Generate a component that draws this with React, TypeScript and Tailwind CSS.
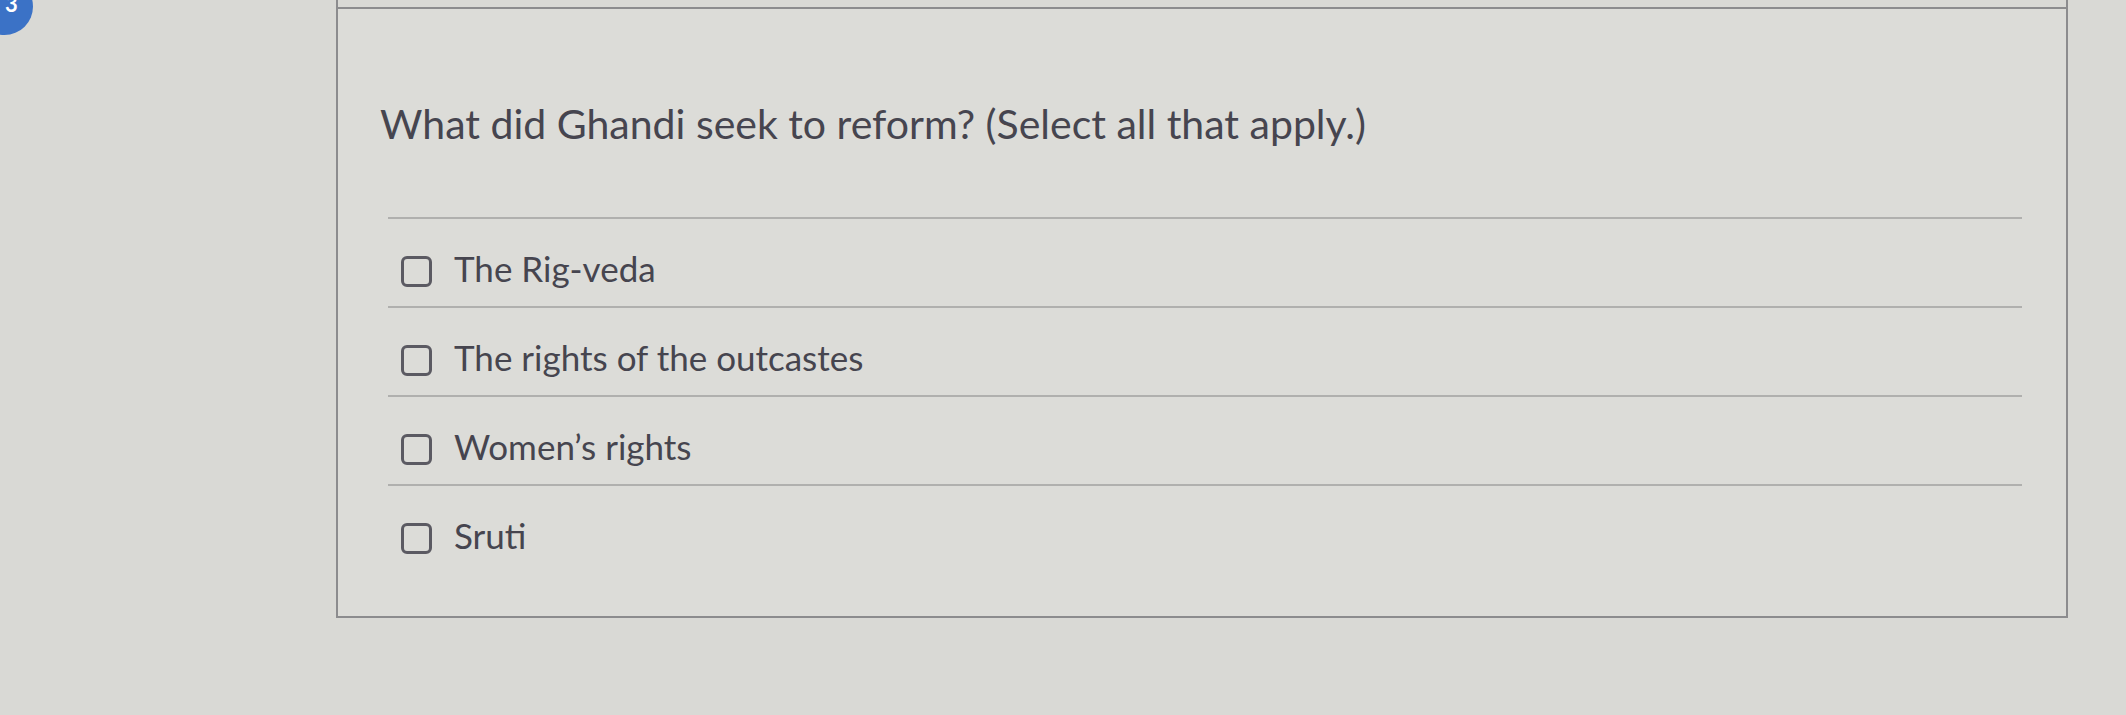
import React from "react";

const options = [
  "The Rig-veda",
  "The rights of the outcastes",
  "Women\u2019s rights",
  "Sruti",
];

export default function App() {
  return (
    <div className="relative w-[2126px] h-[715px] overflow-hidden bg-[#d9d9d5] font-['Lato','Noto_Sans',sans-serif] text-[#46454f]">
      <div className="absolute left-[-24px] top-[-22px] w-[57px] h-[57px] rounded-full bg-[#3b72c6] flex items-end justify-center pb-[20px] pl-[14px] text-white text-[22px] font-bold leading-none">
        3
      </div>

      <div className="ml-[336px] mr-[58px] flex flex-col">
        <div className="h-[7px] border-x-2 border-[#8c8c8e]" />
        <div className="bg-[#dcdcd8] border-2 border-[#8c8c8e] pl-[42px] pr-[44px] pt-[90px] pb-[43px]">
          <p className="text-[41px] leading-[1.2]">
            What did Ghandi seek to reform? (Select all that apply.)
          </p>
          <div className="mt-[69px] pl-[8px] flex flex-col">
            {options.map((o) => (
              <div key={o} className="border-t-2 border-[#b0b0ae] pt-[28px] pb-[17px]">
                <label className="flex items-start gap-[22px] pl-[13px]">
                  <span className="mt-[9px] w-[31px] h-[31px] shrink-0 rounded-[6px] border-[3px] border-[#5b5a62]" />
                  <span className="text-[35px] leading-[1.2]">{o}</span>
                </label>
              </div>
            ))}
          </div>
        </div>
      </div>
    </div>
  );
}
